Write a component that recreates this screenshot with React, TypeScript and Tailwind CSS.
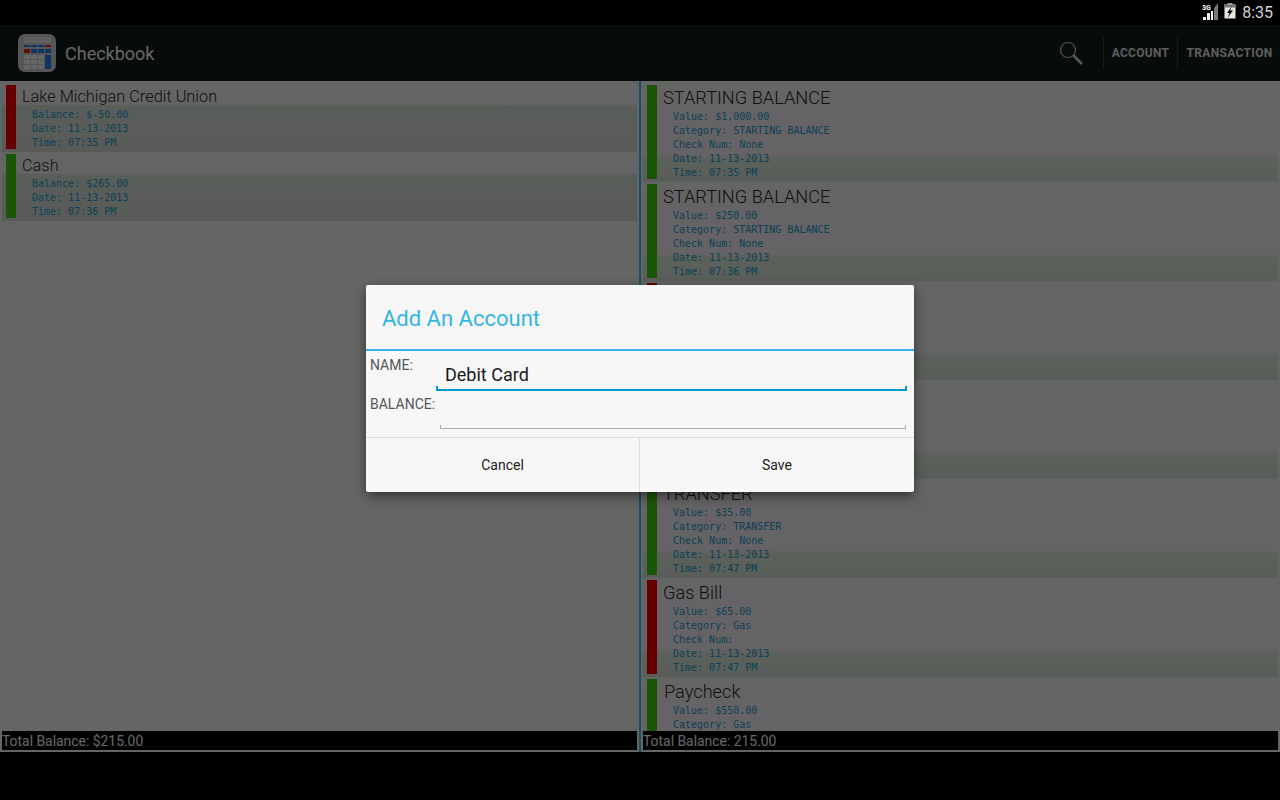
import React from "react";

const mono = "font-['DejaVu_Sans_Mono',monospace]";

function Row({ title, color, lines, right, indent }: { title?: string; color: string; lines?: string[]; right?: boolean; indent?: boolean }) {
  return (
    <div
      className={`flex shrink-0 pl-[4px] pt-[2px] pb-[3px] ${
        right
          ? "h-[99px] bg-[linear-gradient(180deg,#fafffa_0%,#fbfbfb_8%,#fff7ff_25%,#fff7ff_72%,#e3f1e3_76%,#e1ebe1_100%)]"
          : "h-[69px] bg-[linear-gradient(180deg,#fafffa_0%,#fafffa_6%,#fff7ff_15%,#fff7ff_31%,#dfeadf_33%,#dfe2dc_100%)]"
      }`}
    >
      <div className={`w-[10px] ${color} shrink-0`} />
      <div className="flex flex-col pl-[6px]">
        <div
          className={`font-['Roboto'] font-light text-[#2b2b2b] whitespace-nowrap ${
            right ? "text-[18.2px] leading-[25px] h-[25px]" : "text-[16.33px] leading-[24px] h-[23px]"
          } ${indent ? "pl-px" : ""}`}
        >
          {title}
        </div>
        <div className={`pl-[10px] ${mono} text-[10px] leading-[14px] text-[#1ca3d6] whitespace-pre`}>
          {(lines ?? []).map((l, i) => (
            <div key={i} className="h-[14px]">
              {l}
            </div>
          ))}
        </div>
      </div>
    </div>
  );
}

const red = "bg-[#ff0000]";
const green = "bg-[#45d812]";

const tx = (v: string, cat: string, chk: string, t: string) => [
  `Value: ${v}`,
  `Category: ${cat}`,
  `Check Num: ${chk}`,
  "Date: 11-13-2013",
  `Time: ${t}`,
];

export default function App() {
  return (
    <div className="relative w-[1280px] h-[800px] overflow-hidden bg-black font-['Roboto',sans-serif]">
      <div className="h-[25px] bg-black" />
      <div className="h-[56px] bg-[#121f19] flex items-center text-white">
        <div className="ml-[18px] w-[38px] h-[38px]">
          <svg viewBox="0 0 38 38" width="38" height="38">
            <rect x="0" y="0" width="38" height="38" rx="7" fill="#d4d4d4" />
            <rect x="6" y="3" width="27" height="6" fill="#f0f0f0" />
            <rect x="6" y="11" width="6" height="2" fill="#2a80ff" />
            <rect x="13" y="11" width="6" height="2" fill="#2a80ff" />
            <rect x="20" y="11" width="6" height="2" fill="#2a80ff" />
            <rect x="27" y="11" width="6" height="2" fill="#ff2000" />
            <rect x="6" y="15" width="6" height="4" fill="#ff2000" />
            <rect x="13" y="15" width="6" height="4" fill="#2a80ff" />
            <rect x="20" y="15" width="6" height="4" fill="#2a80ff" />
            <rect x="27" y="15" width="6" height="4" fill="#2a80ff" />
            {[21, 26, 31].flatMap((y) =>
              [6, 13, 20].map((x) => <rect key={`${x}-${y}`} x={x} y={y} width="6" height="4" fill="#ffffff" />)
            )}
            <rect x="27" y="21" width="6" height="14" fill="#2a80ff" />
          </svg>
        </div>
        <div className="ml-[9px] mt-[1px] text-[18px] text-white">Checkbook</div>
        <div className="ml-auto flex items-center h-full">
          <svg width="24" height="24" viewBox="0 0 24 24" className="mr-[20px] text-white opacity-80" fill="none" stroke="currentColor">
            <circle cx="9" cy="9" r="7.5" strokeWidth="1.2" />
            <path d="M15 15l7 7" strokeWidth="3" strokeLinecap="round" />
          </svg>
          <div className="w-px h-[32px] bg-[#3a4540]" />
          <div className="w-[73px] text-center text-[12px] font-bold tracking-[0.3px] text-white opacity-90">ACCOUNT</div>
          <div className="w-px h-[32px] bg-[#3a4540]" />
          <div className="w-[102px] pl-[1px] text-center text-[12px] font-bold tracking-[0.35px] text-white opacity-90">TRANSACTION</div>
        </div>
      </div>
      <div className="h-[671px] flex bg-[#fafffa]">
        <div className="w-[639px] flex flex-col">
          <div className="h-[650px] pt-[2px] px-[2px] overflow-hidden flex flex-col">
            <Row title="Lake Michigan Credit Union" color={red} lines={["Balance: $-50.00", "Date: 11-13-2013", "Time: 07:35 PM"]} />
            <Row title="Cash" color={green} lines={["Balance: $265.00", "Date: 11-13-2013", "Time: 07:36 PM"]} />
          </div>
          <div className="mx-[2px] h-[19px] bg-black text-white text-[13.9px] leading-[20px]">Total Balance: $215.00</div>
        </div>
        <div className="w-[2px] bg-[#33ccff]" />
        <div className="flex-1 flex flex-col">
          <div className="h-[650px] pt-[2px] px-[2px] overflow-hidden flex flex-col">
            <Row right title="STARTING BALANCE" color={green} lines={tx("$1,000.00", "STARTING BALANCE", "None", "07:35 PM")} />
            <Row right title="STARTING BALANCE" color={green} lines={tx("$250.00", "STARTING BALANCE", "None", "07:36 PM")} />
            <Row right color={red} />
            <Row right color={red} />
            <Row right title="TRANSFER" color={green} lines={tx("$35.00", "TRANSFER", "None", "07:47 PM")} />
            <Row right title="Gas Bill" color={red} lines={tx("$65.00", "Gas", "", "07:47 PM")} />
            <Row right indent title="Paycheck" color={green} lines={["Value: $550.00", "Category: Gas"]} />
          </div>
          <div className="mx-[2px] h-[19px] bg-black text-white text-[13.9px] leading-[20px]">Total Balance: 215.00</div>
        </div>
      </div>
      <div className="absolute inset-0 bg-black/60" />
      {/* status bar */}
      <div className="absolute top-0 right-[7px] h-[25px] flex items-center text-white">
        <svg width="17" height="18" viewBox="0 0 17 18" className="mr-[5px] mt-[-1px]">
          <text x="0" y="7" fontSize="7" fontWeight="700" fontFamily="Roboto" fill="#fff">3G</text>
          <path d="M1 17h3v-3H1zM5 17h3v-7H5zM9 17h2V8h-2z" fill="#f2f2f2" />
          <path d="M12 17h4V0l-4 5z" fill="#777" />
        </svg>
        <svg width="12" height="16" viewBox="0 0 12 16" className="mr-[6px] mt-[-4px]">
          <rect x="0.5" y="1.5" width="11" height="14" fill="#e8e8e8" />
          <rect x="0.5" y="1.5" width="11" height="3" fill="#777" />
          <rect x="3.5" y="0" width="5" height="2" fill="#999" />
          <path d="M8 3L3 10h2.5L3.5 15 9 7.5H6z" fill="#000" />
        </svg>
        <div className="text-[16px] text-[#d4d4d4]">8:35</div>
      </div>
      {/* dialog */}
      <div className="absolute left-[366px] top-[285px] w-[548px] h-[207px] bg-[#f7f7f7] rounded-[2px] shadow-[0_4px_12px_rgba(0,0,0,0.5)] flex flex-col">
        <div className="h-[64px] pl-[16px] text-[22px] leading-[67px] text-[#33b5e5]">Add An Account</div>
        <div className="h-[2px] bg-[#33b5e5]" />
        <div className="h-[86px]">
          <div className="flex h-[40px]">
            <div className="w-[70px] pl-[4px] pt-[5px] text-[14px] leading-[18px] text-[#555]">NAME:</div>
            <div className="w-[471px] h-[40px] flex flex-col">
              <div className="h-[35px] pl-[9px] pt-[12px] text-[18px] leading-[24px] text-[#1a1a1a]">Debit Card</div>
              <div className="h-[5px] border-x-2 border-b-2 border-[#0099cc]" />
            </div>
          </div>
          <div className="flex h-[38px]">
            <div className="w-[74px] pl-[4px] pt-[4px] text-[14px] leading-[18px] text-[#555]">BALANCE:</div>
            <div className="w-[466px] h-[38px] flex flex-col justify-end">
              <div className="h-[4px] border-x border-b border-[#aaa]" />
            </div>
          </div>
        </div>
        <div className="flex-1 border-t border-[#dcdcdc] flex text-[14px] text-[#222]">
          <div className="w-[274px] border-r border-[#dcdcdc] flex items-center justify-center">Cancel</div>
          <div className="flex-1 flex items-center justify-center">Save</div>
        </div>
      </div>
    </div>
  );
}
